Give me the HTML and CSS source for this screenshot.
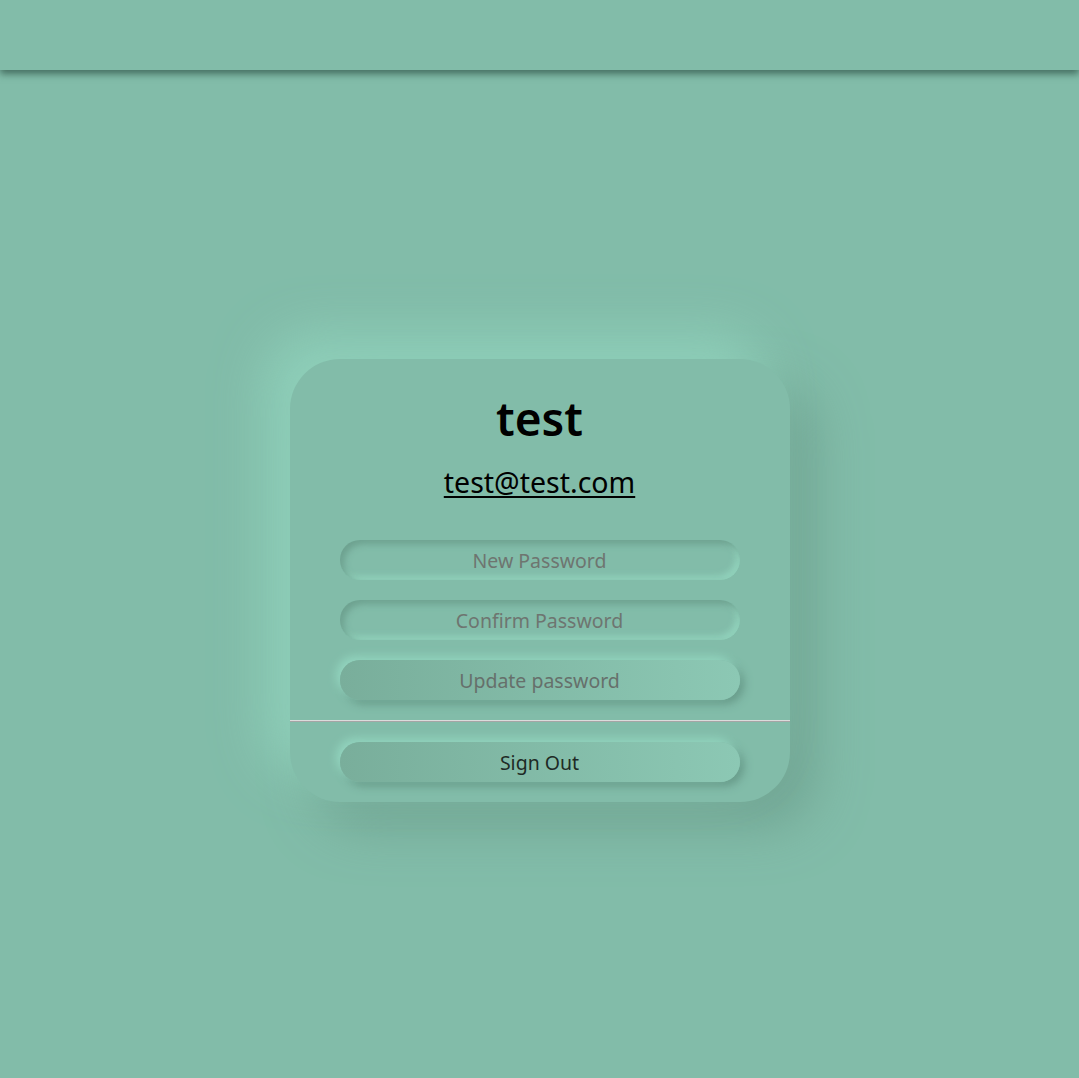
FILE: index.html
```html
<!DOCTYPE html>
<html>
<head>
<meta charset="utf-8">
<link rel="stylesheet" href="styles.css">
</head>
<body>
<header class="topbar"></header>
<main class="stage">
  <section class="card">
    <h1 class="name">test</h1>
    <a class="email" href="#">test@test.com</a>
    <form class="form">
      <input class="field" type="password" placeholder="New Password">
      <input class="field" type="password" placeholder="Confirm Password">
      <button class="btn btn-muted" type="button">Update password</button>
    </form>
    <hr class="divider">
    <div class="footer">
      <button class="btn" type="button">Sign Out</button>
    </div>
  </section>
</main>
</body>
</html>
```

FILE: styles.css
```css
* { box-sizing: border-box; }
html, body {
  margin: 0;
  padding: 0;
  background: #82bca9;
  font-family: "Noto Sans", "Open Sans", sans-serif;
  height: 100%;
}
.topbar {
  height: 70px;
  background: #82bca9;
  box-shadow: 0 4px 7px rgba(30, 60, 50, 0.6);
  position: relative;
  z-index: 2;
}
.stage {
  display: flex;
  justify-content: center;
  padding-top: 289px;
}
.card {
  width: 500px;
  background: #82bca9;
  border-radius: 50px;
  box-shadow: -25px -25px 50px rgba(145, 210, 188, 0.85), 25px 25px 50px rgba(110, 160, 143, 0.8);
  display: flex;
  flex-direction: column;
  align-items: center;
  padding-top: 32px;
  padding-bottom: 20px;
}
.name {
  margin: 0;
  font-size: 46px;
  font-weight: 600;
  line-height: 54px;
  color: #000;
}
.email {
  margin-top: 18px;
  font-size: 28.5px;
  line-height: 38px;
  color: #000;
  text-decoration: underline;
  text-decoration-thickness: 2px;
  text-underline-offset: 3px;
}
.form {
  margin-top: 39px;
  width: 400px;
  display: flex;
  flex-direction: column;
  gap: 20px;
}
.field, .btn {
  width: 400px;
  height: 40px;
  border: none;
  border-radius: 20px;
  font-family: inherit;
  font-size: 19.5px;
  text-align: center;
  outline: none;
}
.field {
  background: #82bca9;
  box-shadow: inset 4px 4px 6px rgba(108, 158, 141, 0.9), inset -4px -4px 6px rgba(146, 212, 190, 0.9);
  color: #333;
}
.field::placeholder { color: #6e7570; }
.btn {
  background: linear-gradient(90deg, #79ae9b, #8cc8b4);
  box-shadow: -4px -4px 8px rgba(146, 212, 190, 1), 4px 4px 8px rgba(100, 150, 133, 0.9);
  color: #1e2a25;
  cursor: pointer;
}
.btn-muted { color: #66706b; }
.divider {
  width: 100%;
  margin: 20px 0 0;
  border: none;
  border-top: 1px solid #dcdcdc;
  border-bottom: 1px solid #a5a5a5;
  height: 0;
}
.footer {
  margin-top: 20px;
}
```
